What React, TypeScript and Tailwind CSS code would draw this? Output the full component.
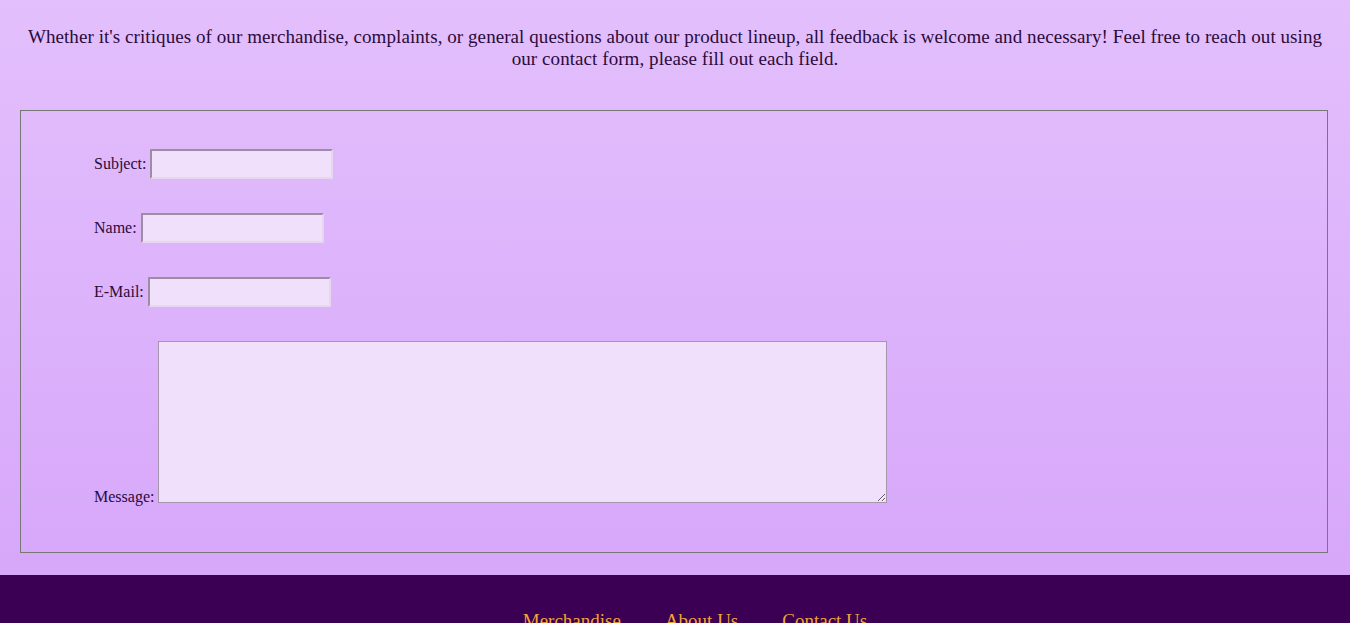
const fields = [
  { label: 'Subject:', id: 'subject' },
  { label: 'Name:', id: 'name' },
  { label: 'E-Mail:', id: 'email' },
]

const links = ['Merchandise', 'About Us', 'Contact Us']

export default function App() {
  return (
    <div className="min-h-screen font-['Liberation_Serif',serif] text-[#2a0b3c]">
      <main className="bg-gradient-to-b from-[#e3bffc] to-[#d7a7fa] px-5 pt-[26px] pb-[22px]">
        <p className="text-center text-[19px] leading-[22px] tracking-[0.07px]">
          Whether it's critiques of our merchandise, complaints, or general questions about our product lineup, all
          feedback is welcome and necessary! Feel free to reach out using our contact form, please fill out each field.
        </p>

        <form className="mt-10 mr-[2px] border border-[#777777] pl-[73px] pt-[38px] pb-[49px] text-[16px]">
          <div className="flex flex-col gap-[34px]">
            {fields.map((f) => (
              <div key={f.id} className="flex items-center gap-[4px]">
                <label htmlFor={f.id} className="leading-[18px]">
                  {f.label}
                </label>
                <input
                  id={f.id}
                  type="text"
                  className="h-[30px] w-[183px] border-2 border-t-[#9c8ca4] border-l-[#9c8ca4] border-b-[#e6d6ee] border-r-[#e6d6ee] bg-[#f0e0fb] px-1 outline-none"
                />
              </div>
            ))}
            <div className="flex items-end gap-[4px]">
              <label htmlFor="message" className="mb-[-3px] leading-[18px]">
                Message:
              </label>
              <textarea
                id="message"
                className="h-[162px] w-[729px] resize border border-[#a595ad] bg-[#f0e0fb] outline-none"
              />
            </div>
          </div>
        </form>
      </main>

      <footer className="h-[100px] bg-[#3b0053] pt-[35px]">
        <ul className="flex justify-center gap-[44px] pl-10 text-[19px] leading-[22px]">
          {links.map((l) => (
            <li key={l}>
              <a href="#" className="text-[#f0a438] underline">
                {l}
              </a>
            </li>
          ))}
        </ul>
      </footer>
    </div>
  )
}
